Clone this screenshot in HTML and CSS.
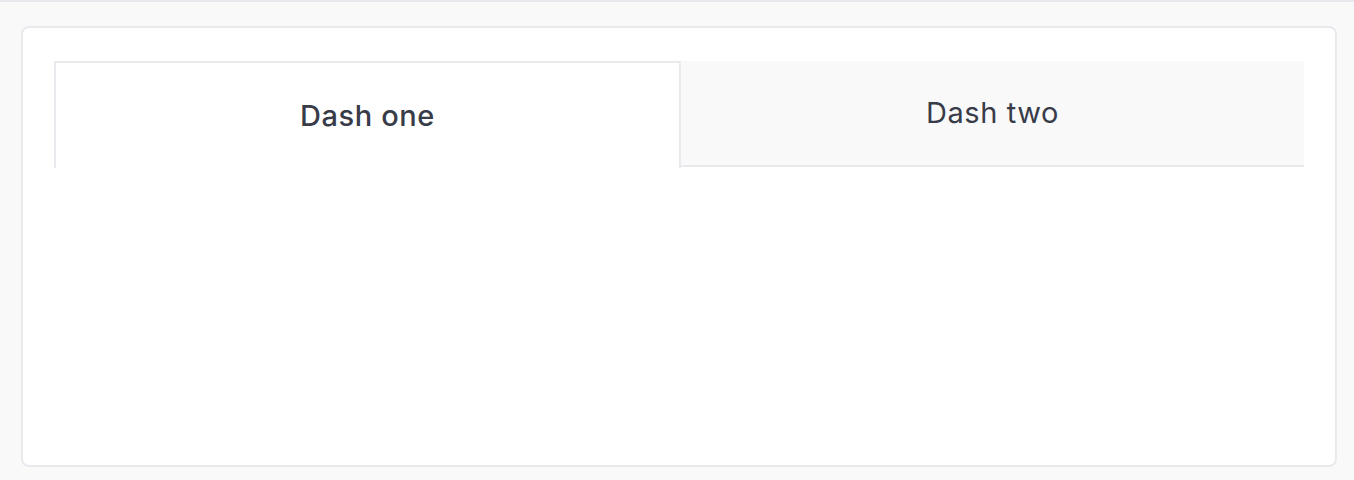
FILE: index.html
```html
<!DOCTYPE html>
<html lang="en">

<head>
  <meta charset="UTF-8">
  <meta name="viewport" content="width=device-width, initial-scale=1.0">
  <title>Dashboards</title>
  <link rel="stylesheet" href="styles.css">
</head>

<body>
  <div class="topbar"></div>

  <main class="card">
    <!-- Tabs -->
    <div class="tabs">
      <div class="tab active">Dash one</div>
      <div class="tab">Dash two</div>
    </div>
    <div class="tab-content"></div>
  </main>
</body>

</html>
```

FILE: styles.css
```css
body {
  font-family: Inter, 'Noto Sans', sans-serif;
  background-color: #f9f9fa;
  margin: 0;
  padding: 0;
  color: #383b48;
}

.topbar {
  height: 2px;
  background-color: #e8e8ec;
}

.card {
  margin: 24px 17px 15px 21px;
  height: 404px;
  padding: 33px 31px 0 31px;
  background-color: #fff;
  border: 2px solid #e9e9ee;
  border-radius: 8px;
  box-sizing: content-box;
}

.tabs {
  display: flex;
  align-items: flex-start;
}

.tab {
  flex: 1;
  text-align: center;
  font-size: 29px;
  letter-spacing: 0.6px;
  height: 104px;
  line-height: 104px;
  background-color: #f9f9fa;
  border-bottom: 2px solid #e9e9ee;
}

.tab.active {
  font-weight: 500;
  height: 105px;
  line-height: 106px;
  background-color: #fff;
  border: 2px solid #e9e9ee;
  border-bottom: none;
}
```
